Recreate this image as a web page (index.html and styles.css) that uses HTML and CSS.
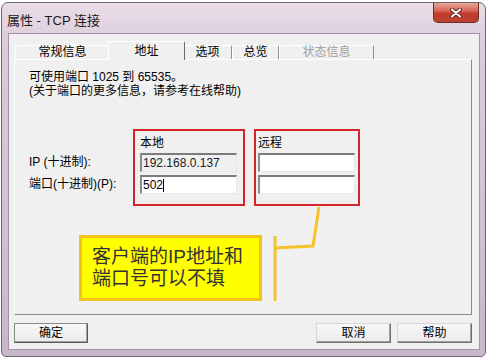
FILE: index.html
```html
<!DOCTYPE html>
<html lang="zh-CN">
<head>
    <meta charset="UTF-8">
    <title>属性 - TCP 连接</title>
    <link rel="stylesheet" href="styles.css">
</head>
<body>
    <div class="window">
        <div class="titlebar">
            <span class="title">属性 - TCP 连接</span>
            <div class="close-btn">
                <svg width="12" height="10" viewBox="0 0 12 10">
                    <path d="M2 1.5 L10 8.5 M10 1.5 L2 8.5" stroke="#5a1d17" stroke-width="4" stroke-linecap="round"/>
                    <path d="M2 1.5 L10 8.5 M10 1.5 L2 8.5" stroke="#fff" stroke-width="2.2" stroke-linecap="round"/>
                </svg>
            </div>
        </div>

        <div class="client">
            <!-- вкладки -->
            <div class="tabs">
                <div class="tab tab-general">常规信息</div>
                <div class="tab tab-active">地址</div>
                <div class="tab tab-options">选项</div>
                <div class="tab tab-overview">总览</div>
                <div class="tab tab-state">状态信息</div>
            </div>

            <div class="panel">
                <p class="hint">可使用端口 1025 到 65535。<br>(关于端口的更多信息，请参考在线帮助)</p>

                <div class="addr-row">
                    <div class="addr-labels">
                        <div class="addr-label">IP (十进制):</div>
                        <div class="addr-label">端口(十进制)(P):</div>
                    </div>
                    <div class="addr-group group-local">
                        <div class="group-title">本地</div>
                        <div class="field field-disabled">192.168.0.137</div>
                        <div class="field">502<span class="caret"></span></div>
                    </div>
                    <div class="addr-group group-remote">
                        <div class="group-title">远程</div>
                        <div class="field"></div>
                        <div class="field"></div>
                    </div>
                </div>

                <div class="callout">客户端的IP地址和<br>端口号可以不填</div>

                <!-- скобка-указатель -->
                <svg class="bracket" width="55" height="105" viewBox="0 0 55 105">
                    <path d="M5 36 L5 101 M5 48 L43 46 L49 7" fill="none" stroke="#f5c22c" stroke-width="3"/>
                </svg>
            </div>

            <div class="footer">
                <button class="btn btn-default">确定</button>
                <div class="spacer"></div>
                <button class="btn">取消</button>
                <button class="btn">帮助</button>
            </div>
        </div>
    </div>
</body>
</html>
```

FILE: styles.css
```css
body {
    margin: 0;
    background-color: #fff;
    font-family: "Liberation Sans", "Noto Sans CJK SC", sans-serif;
    font-size: 12px;
    color: #000;
}

.window {
    margin: 2px 2px 0 1px;
    height: 355px;
    box-sizing: border-box;
    border: 1px solid #6e6470;
    border-radius: 7px 7px 5px 5px;
    background: linear-gradient(to bottom, #e9dde7 0%, #dccbda 12%, #d3c1d3 60%, #c9b6ca 100%);
    display: flex;
    flex-direction: column;
}

.titlebar {
    height: 30px;
    display: flex;
    justify-content: space-between;
    align-items: flex-start;
    padding: 0 6px 0 5px;
}

.title {
    font-size: 13px;
    line-height: 13px;
    margin-top: 11px;
    color: #1a1a1a;
}

.close-btn {
    width: 46px;
    height: 20px;
    box-sizing: border-box;
    border: 1px solid #6c2a24;
    border-top: none;
    border-radius: 0 0 5px 5px;
    background: linear-gradient(to bottom, #e8a596 0%, #d6685a 40%, #c23b2c 55%, #b9402f 100%);
    display: flex;
    align-items: center;
    justify-content: center;
}

.client {
    flex: 1;
    margin: 0 5px 6px 6px;
    border: 1px solid #a093a3;
    background-color: #f0f0f0;
    display: flex;
    flex-direction: column;
}

/* вкладки */
.tabs {
    display: flex;
    align-items: flex-end;
    height: 18px;
    margin-top: 7px;
    padding-left: 6px;
}

.tab {
    height: 14px;
    box-sizing: border-box;
    border-top: 1px solid #fff;
    border-left: 1px solid #fff;
    border-right: 1px solid #8f8f8f;
    border-radius: 2px 2px 0 0;
    text-align: center;
    line-height: 13px;
    font-size: 12px;
}

.tab-general { width: 95px; }
.tab-options { width: 49px; }
.tab-overview { width: 47px; }
.tab-state { width: 95px; color: #a0a0a0; }

.tab-active {
    position: relative;
    z-index: 1;
    width: 77px;
    height: 19px;
    margin: 0 -2px -1px -2px;
    line-height: 18px;
    background-color: #f0f0f0;
    border-right-color: #696969;
}

.panel {
    position: relative;
    margin-left: 5px;
    width: 458px;
    height: 256px;
    box-sizing: border-box;
    border-top: 1px solid #fff;
    border-left: 1px solid #fff;
    border-right: 1px solid #8a8a8a;
    border-bottom: 1px solid #8a8a8a;
    padding: 10px 14px;
}

.hint {
    margin: 0;
    line-height: 14px;
}

.addr-row {
    display: flex;
    margin-top: 31px;
}

.addr-labels {
    width: 104px;
    padding-top: 24px;
    display: flex;
    flex-direction: column;
    gap: 3px;
}

.addr-label {
    height: 19px;
    line-height: 19px;
}

.addr-group {
    box-sizing: border-box;
    border: 2px solid #d3252a;
    display: flex;
    flex-direction: column;
    gap: 3px;
}

.group-local {
    width: 112px;
    padding: 4px 6px 10px 5px;
}

.group-remote {
    width: 106px;
    margin-left: 9px;
    padding: 4px 3px 10px 2px;
}

.group-title {
    line-height: 16px;
    margin-bottom: -1px;
}

.field {
    height: 19px;
    box-sizing: border-box;
    border-top: 2px solid #7c7c7c;
    border-left: 2px solid #8c8c8c;
    border-right: 1px solid #e6e6e6;
    border-bottom: 1px solid #e6e6e6;
    background-color: #fff;
    padding-left: 1px;
    line-height: 15px;
    display: flex;
    align-items: center;
}

.field-disabled {
    background-color: #f0f0f0;
    color: #202020;
}

.caret {
    width: 1px;
    height: 13px;
    background-color: #000;
}

/* выноска */
.callout {
    margin: 29px 0 0 50px;
    width: 183px;
    height: 66px;
    box-sizing: border-box;
    border: 3px solid #f2c21a;
    background-color: #ffff00;
    padding: 8px 10px;
    font-size: 19px;
    line-height: 21.5px;
    color: #333;
}

.bracket {
    position: absolute;
    left: 255px;
    top: 140px;
}

.footer {
    display: flex;
    gap: 6px;
    margin-top: 8px;
    padding: 0 7px 0 5px;
}

.spacer {
    flex: 1;
}

.btn {
    width: 75px;
    height: 20px;
    box-sizing: border-box;
    border: 1px solid #707070;
    border-top-color: #d8d8d8;
    border-left-color: #d8d8d8;
    background: linear-gradient(to bottom, #f7f7f7, #ebebeb);
    box-shadow: inset -1px -1px #a0a0a0;
    font-family: "Liberation Sans", "Noto Sans CJK SC", sans-serif;
    font-size: 12px;
    padding: 0;
    line-height: 18px;
    color: #000;
}

.btn-default {
    width: 74px;
    border-color: #5a5a5a;
    border-top-color: #8a8a8a;
    border-left-color: #8a8a8a;
}
```
